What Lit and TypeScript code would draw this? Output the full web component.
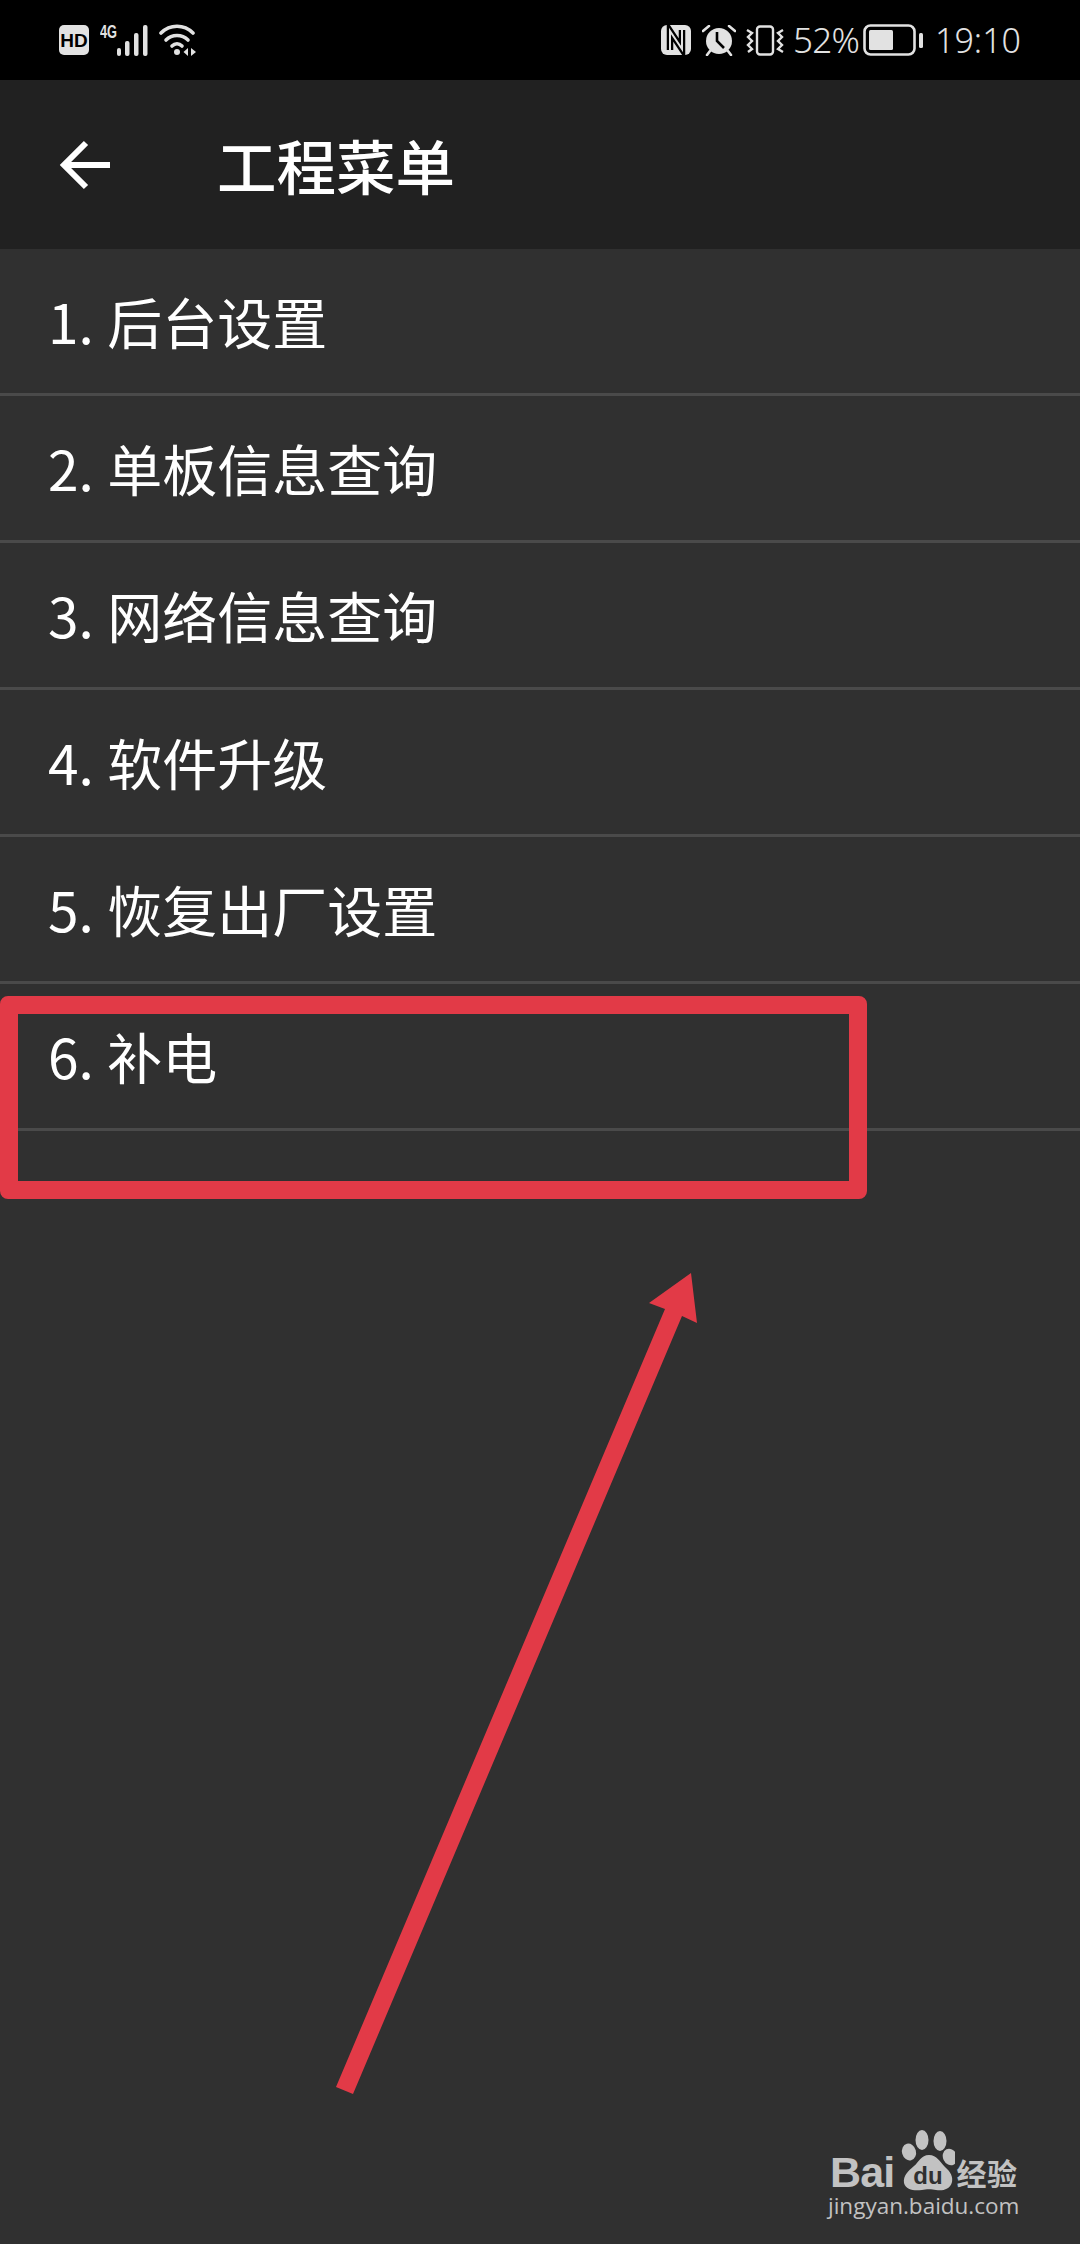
import { LitElement, html, css } from "lit";
import { customElement } from "lit/decorators.js";

const ITEMS = ["1. 后台设置", "2. 单板信息查询", "3. 网络信息查询", "4. 软件升级", "5. 恢复出厂设置", "6. 补电"];

@customElement("app-root")
export class AppRoot extends LitElement {
  static styles = css`
    :host { display: block; position: relative; width: 1080px; height: 2244px; overflow: hidden; background: #303030;
      font-family: "Noto Sans CJK SC", "Noto Sans", sans-serif; color: #fff; }
    .status { height: 80px; background: #000; display: flex; align-items: center; justify-content: space-between;
      padding: 0 59px 0 59px; box-sizing: border-box; color: #e2e2e2; }
    .side { display: flex; align-items: center; }
    .status svg { display: block; flex: none; }
    .four { margin-left: 11px; }
    .wifi { margin-left: 9px; }
    .pct { font: 300 35px/40px "Noto Sans", sans-serif; width: 70px; margin-left: 9px; letter-spacing: -0.8px; }
    .time { font: 300 34px/40px "Noto Sans", sans-serif; margin-left: 11px; letter-spacing: 0; }
    .alarm { margin-left: 11px; }
    .vib { margin-left: 10px; }
    header { height: 169px; background: #212121; display: flex; align-items: center; padding-left: 58px; box-sizing: border-box; }
    header svg { display: block; margin-right: 107px; }
    h1 { margin: 0; font-size: 59.5px; font-weight: 500; line-height: 80px; position: relative; top: -1px; }
    .row { height: 147px; box-sizing: border-box; border-bottom: 3px solid #4a4a4a; display: flex; align-items: center;
      padding: 0 0 0 48px; font-size: 55px; font-weight: 400; word-spacing: 1px; }
    .row span { position: relative; top: -1px; }
    .overlay { position: absolute; left: 0; top: 0; pointer-events: none; }
    .box { position: absolute; left: 0; top: 996px; width: 867px; height: 203px; box-sizing: border-box;
      border: 18px solid #e23a47; border-radius: 8px; }
    .mark { position: absolute; left: 828px; top: 2124px; color: #c2c2c2; display: flex; flex-direction: column; }
    .logo { display: flex; align-items: flex-end; height: 68px; }
    .bai { font: 700 43px/40px "Liberation Sans", sans-serif; letter-spacing: -0.8px; margin-left: 2px; }
    .paw { display: block; margin-left: 4px; }
    .jy { font-size: 30px; line-height: 40px; font-weight: 700; margin-left: 2px; letter-spacing: 0.5px; }
    .url { font: 400 22.500px/26px "Open Sans", sans-serif; margin-top: 1px; }
  `;

  render() {
    return html`
      <div class="status">
        <div class="side">
          <svg width="30" height="30" viewBox="0 0 30 30"><rect x="0" y="0" width="30" height="30" rx="5" fill="#e2e2e2"/><text x="15" y="22" text-anchor="middle" font-family="Liberation Sans" font-weight="700" font-size="19" fill="#000">HD</text></svg>
          <svg class="four" width="50" height="40" viewBox="0 -4 50 40">
            <text x="0" y="14" font-family="Liberation Sans" font-weight="700" font-size="18" fill="#e2e2e2" textLength="17" lengthAdjust="spacingAndGlyphs">4G</text>
            <g fill="#e2e2e2"><rect x="17" y="24" width="4" height="8" rx="2"/><rect x="25" y="17" width="4.5" height="15" rx="2"/><rect x="34" y="9" width="4.5" height="23" rx="2"/><rect x="43" y="1" width="4.5" height="31" rx="2"/></g>
          </svg>
          <svg class="wifi" width="38" height="32" viewBox="0 0 38 32" fill="none" stroke="#e2e2e2" stroke-width="3.6" stroke-linecap="round">
            <path d="M2 9 C11 0 25 0 34 9"/><path d="M7 16 C13 10 23 10 29 16"/><path d="M13 22 C16 19 20 19 23 22"/>
            <circle cx="18" cy="28" r="3" fill="#e2e2e2" stroke="none"/>
            <path d="M29 24 L24.500 28 L29 32Z M32 24 L37 28 L32 32Z" fill="#e2e2e2" stroke="none"/>
          </svg>
        </div>
        <div class="side">
          <svg width="30" height="30" viewBox="0 0 30 30"><rect width="30" height="30" rx="6" fill="#e2e2e2"/><path d="M9 25 V6 L21 24 V5" fill="none" stroke="#000" stroke-width="6.500"/><path d="M9 25 V6 L21 24 V5" fill="none" stroke="#e2e2e2" stroke-width="2"/></svg>
          <svg class="alarm" width="34" height="31" viewBox="0 0 34 31">
            <circle cx="17" cy="16" r="13" fill="#e2e2e2"/><path d="M15 7 V16 L22 23" fill="none" stroke="#000" stroke-width="2.600"/>
            <path d="M1 6 L7 1 M33 6 L27 1 M5 30 L8 26 M29 30 L26 26" stroke="#e2e2e2" stroke-width="2.600" stroke-linecap="round"/>
          </svg>
          <svg class="vib" width="38" height="31" viewBox="0 0 38 31" fill="none" stroke="#e2e2e2" stroke-width="2.400">
            <rect x="11" y="1.500" width="16" height="28" rx="3"/>
            <path d="M1 5 L6 8 L2 12 L6 16 L2 20 L6 24 L2 27"/><path d="M37 5 L32 8 L36 12 L32 16 L36 20 L32 24 L37 27"/>
          </svg>
          <div class="pct">52%</div>
          <svg width="61" height="32" viewBox="0 0 61 32">
            <rect x="1.500" y="1.500" width="50" height="29" rx="6" fill="none" stroke="#e2e2e2" stroke-width="2.600"/>
            <rect x="6" y="6" width="24" height="20" rx="1.500" fill="#e2e2e2"/>
            <rect x="56" y="9" width="4" height="15" rx="1.500" fill="#e2e2e2"/>
          </svg>
          <div class="time">19:10</div>
        </div>
      </div>
      <header>
        <svg width="52" height="52" viewBox="0 0 52 52" fill="none" stroke="#fff" stroke-width="6"><path d="M52 26 H6"/><path d="M28 4 L6 26 L28 48"/></svg>
        <h1>工程菜单</h1>
      </header>
      <div class="list">
        ${ITEMS.map((t) => html`<div class="row"><span>${t}</span></div>`)}
      </div>
      <div class="box"></div>
      <svg class="overlay" width="1080" height="2244" viewBox="0 0 1080 2244">
        <polygon fill="#e23a47" points="691,1273 649,1303 665,1309 336,2087 353,2094 682,1316 697,1323"/>
      </svg>
      <div class="mark">
        <div class="logo">
          <span class="bai">Bai</span>
          <svg class="paw" width="56" height="68" viewBox="0 0 56 68">
            <g fill="#c2c2c2">
              <ellipse cx="23" cy="16" rx="6.500" ry="10"/><ellipse cx="41" cy="17" rx="6.500" ry="10"/>
              <ellipse cx="10" cy="28" rx="7" ry="8.500" transform="rotate(-15 10 28)"/><ellipse cx="51" cy="33" rx="7" ry="8.500" transform="rotate(-25 51 33)"/>
              <path d="M30 31 C38 31 41 38 46 43 C52 48 54 53 53 58 C51 66 43 67 37 66 C33 65 27 65 23 66 C15 67 7 66 5 59 C4 52 9 47 15 42 C20 38 22 31 30 31Z"/>
            </g>
            <text x="29" y="60" text-anchor="middle" font-family="Liberation Sans" font-weight="700" font-size="24" fill="#303030">du</text>
          </svg>
          <span class="jy">经验</span>
        </div>
        <div class="url">jingyan.baidu.com</div>
      </div>
    `;
  }
}
